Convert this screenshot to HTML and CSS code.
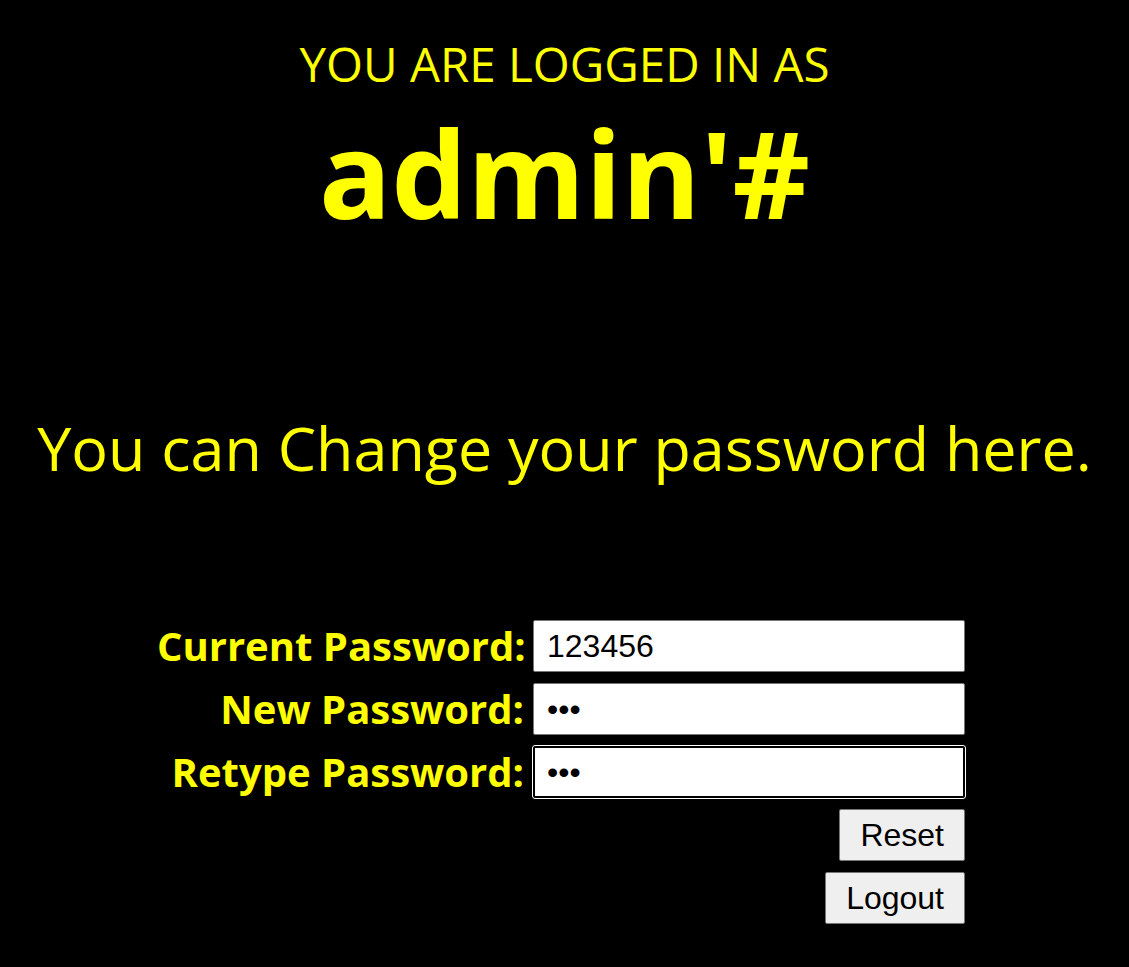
FILE: index.html
```html
<!DOCTYPE html>
<html>
<head>
<meta charset="utf-8">
<link rel="stylesheet" href="styles.css">
</head>
<body>
<div class="page">
  <div class="logged">YOU ARE LOGGED IN AS</div>
  <div class="user">admin'#</div>
  <div class="change">You can Change your password here.</div>
  <form class="form">
    <label class="label">Current Password:</label>
    <input class="field" type="text" value="123456">
    <label class="label">New Password:</label>
    <input class="field" type="password" value="abc">
    <label class="label">Retype Password:</label>
    <input class="field focused" type="password" value="abc">
    <div class="actions">
      <button type="reset" class="btn">Reset</button>
      <button type="button" class="btn">Logout</button>
    </div>
  </form>
</div>
</body>
</html>
```

FILE: styles.css
```css
html, body {
  margin: 0;
  padding: 0;
  background: #000;
}
body {
  font-family: "Open Sans", "Noto Sans", sans-serif;
  color: #ffff00;
}
.page {
  display: flex;
  flex-direction: column;
  align-items: center;
  padding-top: 32px;
}
.logged {
  font-size: 47.5px;
  line-height: 64px;
}
.user {
  font-size: 120px;
  font-weight: 700;
  line-height: 150px;
  margin-top: 2px;
}
.change {
  font-size: 61px;
  line-height: 84px;
  margin-top: 158px;
}
.form {
  display: grid;
  grid-template-columns: 367px 432px;
  column-gap: 9px;
  row-gap: 11px;
  margin-top: 130px;
  margin-left: -7px;
  align-items: center;
}
.label {
  text-align: right;
  font-weight: 700;
  font-size: 40px;
  line-height: 52px;
  white-space: nowrap;
}
.field {
  box-sizing: border-box;
  width: 432px;
  height: 52px;
  margin: 0;
  border: 1px solid #767676;
  border-radius: 2px;
  background: #fff;
  padding: 0 13px;
  font-family: "Liberation Sans", Arial, sans-serif;
  font-size: 32px;
  color: #000;
}
.field.focused {
  outline: 1px solid #fff;
  border: 2px solid #000;
  outline-offset: 0;
  padding: 0 12px;
}
.actions {
  grid-column: 2;
  display: flex;
  flex-direction: column;
  align-items: flex-end;
  gap: 11px;
}
.btn {
  box-sizing: border-box;
  height: 52px;
  margin: 0;
  padding: 0 20px;
  background: #efefef;
  border: 1px solid #767676;
  border-radius: 2px;
  font-family: "Liberation Sans", Arial, sans-serif;
  font-size: 32px;
  color: #000;
}
```
